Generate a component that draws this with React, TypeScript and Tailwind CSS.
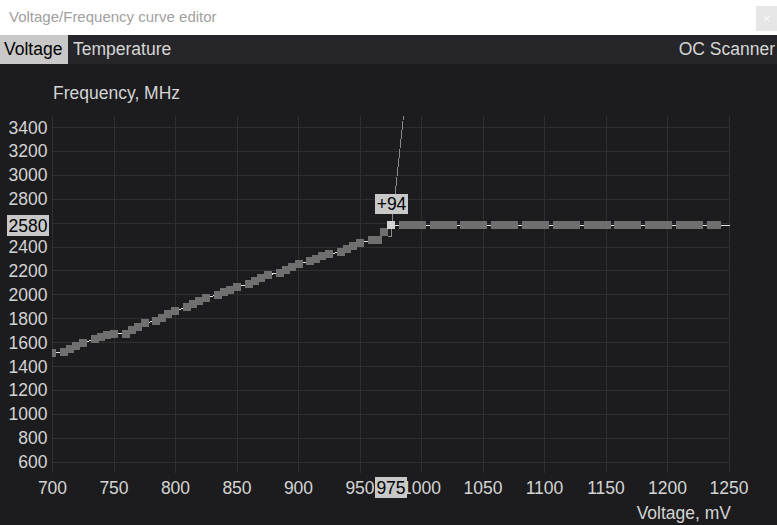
const X = (v: number) => 52.5 + (v - 700) * 1.23;
const Y = (f: number) => 127 + (3400 - f) * 0.1195;

const volts = Array.from({ length: 12 }, (_, i) => 700 + i * 50);
const freqs = Array.from({ length: 15 }, (_, i) => 600 + i * 200);

// first / last y centre of every 25 mV group on the rising part
const rising: [number, number][] = [
  [351.5, 343],
  [339, 333.5],
  [334, 323],
  [321, 311],
  [307, 298],
  [294.5, 287],
  [284, 275],
  [272.5, 264],
  [261, 254],
  [252, 243],
];

type Pt = { x: number; y: number; sel?: boolean };

function buildPoints() {
  const pts: Pt[] = [];
  rising.forEach(([a, b], k) => {
    const s = Math.round(60 + 30.8 * k);
    for (let j = 0; j < 4; j++) pts.push({ x: s + 4 + 6.2 * j, y: a + ((b - a) * j) / 3 });
  });
  pts.push({ x: 372, y: 240 }, { x: 378.2, y: 240 }, { x: 384.4, y: 232 }, { x: 391, y: 225, sel: true });
  for (let k = 11; k <= 21; k++) {
    const s = Math.round(60 + 30.8 * k);
    const n = k === 21 ? 2 : 4;
    for (let j = 0; j < n; j++) pts.push({ x: s + 4 + 6.2 * j, y: 225 });
  }
  return pts;
}

function TitleBar() {
  return (
    <div className="flex h-[35px] shrink-0 items-start justify-between bg-white">
      <span className="mt-[8px] pl-[9px] text-[15px] leading-[18px] text-[#a0a0a0]">
        Voltage/Frequency curve editor
      </span>
      <div className="mt-[6px] flex h-[25px] w-[21px] items-center justify-center bg-[#e6e6e6] text-[13px] leading-none text-[#fafafa]">
        ×
      </div>
    </div>
  );
}

function TabBar() {
  return (
    <div className="flex h-[29px] shrink-0 items-stretch justify-between bg-[#26262a] text-[17.5px] text-[#d6d6d6]">
      <div className="flex">
        <span className="flex w-[68px] items-center bg-[#c8c8c8] pl-[4px] text-black">Voltage</span>
        <span className="flex items-center pl-[5px]">Temperature</span>
      </div>
      <span className="flex items-center pr-[2px]">OC Scanner</span>
    </div>
  );
}

function CurveChart() {
  const pts = buildPoints();
  const line = [{ x: 52, y: 353 }, ...pts, { x: 730, y: 225 }]
    .map((p) => `${p.x},${p.y}`)
    .join(" ");

  return (
    <svg width={777} height={461} viewBox="0 64 777 461" className="block shrink-0 bg-[#1c1c1e]">
      <g shapeRendering="crispEdges" stroke="#2f2f32" strokeWidth={1}>
        {volts.map((v) => (
          <line key={v} x1={Math.floor(X(v)) + 0.5} x2={Math.floor(X(v)) + 0.5} y1={116} y2={473} />
        ))}
        {freqs.map((f) => (
          <line key={f} x1={52} x2={730} y1={Math.round(Y(f)) + 0.5} y2={Math.round(Y(f)) + 0.5} />
        ))}
      </g>

      <text x={53} y={99} className="fill-[#d4d4d4] text-[17.5px]">
        Frequency, MHz
      </text>

      <g className="fill-[#d4d4d4] text-[17.5px]">
        {/* 2600 gives way to the highlighted 2580 value */}
        {freqs
          .filter((f) => f !== 2600)
          .map((f) => (
            <text key={f} x={47.5} y={Y(f) + 6.5} textAnchor="end">
              {f}
            </text>
          ))}
        {volts.map((v) => (
          <text key={v} x={X(v)} y={493.5} textAnchor="middle">
            {v}
          </text>
        ))}
      </g>

      <text x={731} y={519} textAnchor="end" className="fill-[#d4d4d4] text-[17.5px]">
        Voltage, mV
      </text>

      {/* drag guide from the selected point */}
      <g shapeRendering="crispEdges" stroke="#8a8a8a" strokeWidth={1} fill="none">
        <line x1={391.5} y1={228} x2={403.5} y2={116} />
        <polyline points="391.5,229 391.5,236.5 388,236.5" />
      </g>

      <polyline points={line} fill="none" stroke="#e2e2e2" strokeWidth={1} shapeRendering="crispEdges" />

      <g shapeRendering="crispEdges">
        <rect x={52} y={349} width={4} height={8} fill="#6f6f6f" />
        {pts.map((p, i) => (
          <rect
            key={i}
            x={Math.round(p.x - 4)}
            y={Math.round(p.y - 4)}
            width={8}
            height={8}
            fill={p.sel ? "#d2d2d2" : "#6f6f6f"}
          />
        ))}
      </g>

      {/* highlighted values */}
      <rect x={7} y={215} width={42} height={21} fill="#c8c8c8" />
      <text x={47.5} y={231.5} textAnchor="end" className="fill-black text-[17.5px]">
        2580
      </text>
      <rect x={375} y={477} width={32} height={21} fill="#c8c8c8" />
      <text x={391} y={493.5} textAnchor="middle" className="fill-black text-[17.5px]">
        975
      </text>
      <rect x={375} y={194} width={33} height={20} fill="#c8c8c8" />
      <text x={391.5} y={210} textAnchor="middle" className="fill-black text-[17.5px]">
        +94
      </text>
    </svg>
  );
}

export default function App() {
  return (
    <div className="flex h-[525px] w-[777px] flex-col overflow-hidden bg-[#1c1c1e] font-['Liberation_Sans',Arial,sans-serif]">
      <TitleBar />
      <TabBar />
      <CurveChart />
    </div>
  );
}
